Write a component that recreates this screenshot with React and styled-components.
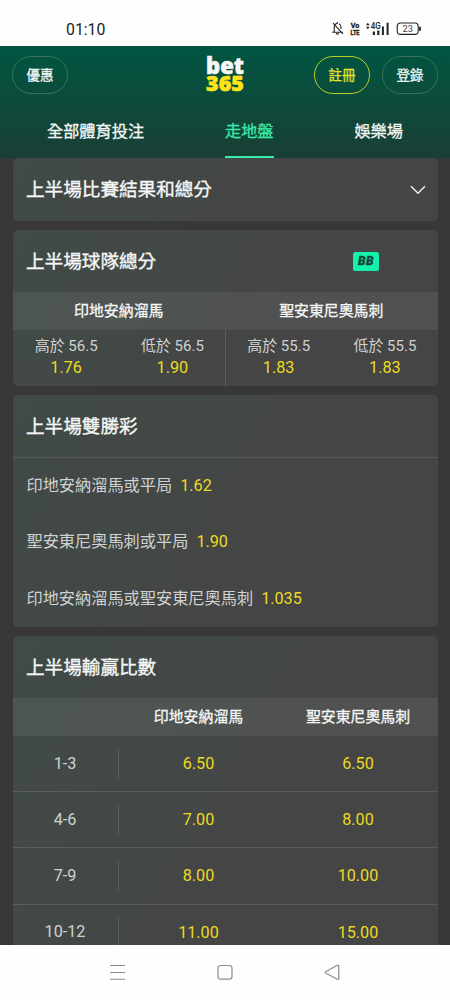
import React from 'react';
import styled, { createGlobalStyle } from 'styled-components';

const Global = createGlobalStyle`
  * { box-sizing: border-box; }
  body { margin: 0; background: #fff; }
`;

const Screen = styled.div`
  width: 450px;
  height: 1000px;
  display: flex;
  flex-direction: column;
  overflow: hidden;
  background: #fefefe;
  color: #f6f8f7;
  font-family: Roboto, "Noto Sans CJK TC", sans-serif;
  white-space: nowrap;
`;

const StatusBar = styled.div`
  height: 46px;
  flex: none;
  display: flex;
  justify-content: space-between;
  padding: 17px 27px 0 66px;
  color: #222;
`;

const Clock = styled.span`
  font-size: 15.8px;
  line-height: 25px;
`;

const Header = styled.header`
  height: 112px;
  flex: none;
  background: linear-gradient(#005641, #0d4b3c 50%, #193e35);
`;

const TopRow = styled.div`
  height: 58px;
  padding: 0 12px;
  display: grid;
  grid-template-columns: 1fr auto 1fr;
  align-items: center;
`;

const Actions = styled.div`
  display: flex;
  justify-content: flex-end;
  gap: 12px;
`;

const Pill = styled.button`
  width: 56px;
  height: 38px;
  padding: 0 0 3px;
  border: 1.5px solid ${(p) => (p.$accent ? '#b9cf25' : '#39705f')};
  border-radius: 19px;
  background: transparent;
  color: ${(p) => (p.$accent ? '#eae32c' : '#f1f6f4')};
  font: 400 13.5px Roboto, "Noto Sans CJK TC", sans-serif;
  -webkit-text-stroke: 0.3px currentColor;
`;

const Logo = styled.div`
  padding-bottom: 3px;
  display: flex;
  flex-direction: column;
  align-items: center;
  font: 800 22px/18px "Open Sans", sans-serif;
  -webkit-text-stroke: 0.6px currentColor;
`;

const LogoDigits = styled.span`
  color: #ffe418;
  font-size: 21.5px;
  line-height: 17px;
`;

const Tabs = styled.nav`
  height: 54px;
  padding: 0 47px;
  display: flex;
  justify-content: space-between;
`;

const Tab = styled.div`
  height: 54px;
  padding-top: 16px;
  border-bottom: 2.5px solid ${(p) => (p.$active ? '#3be8b0' : 'transparent')};
  color: ${(p) => (p.$active ? '#3be8a9' : '#f3f8f6')};
  font-size: 16.2px;
  line-height: 24px;
  -webkit-text-stroke: 0.3px currentColor;
`;

const Markets = styled.main`
  height: 787px;
  flex: none;
  padding: 0 12.5px;
  display: flex;
  flex-direction: column;
  gap: 9px;
  overflow: hidden;
  background: #383838;
`;

const Card = styled.section`
  height: ${(p) => p.$height}px;
  flex: none;
  overflow: hidden;
  border-radius: 5px;
  background: linear-gradient(120deg, #414a47 0%, #424846 35%, #454545 60%, #454545 100%);
`;

const CardHead = styled.div`
  height: 62px;
  padding: 1px 11px 0 13.5px;
  display: flex;
  align-items: center;
  justify-content: space-between;
`;

const Title = styled.h2`
  margin: 0;
  font-size: 18.6px;
  line-height: 28px;
  font-weight: 400;
  -webkit-text-stroke: 0.35px currentColor;
`;

const Builder = styled.span`
  width: 26px;
  height: 19px;
  margin-right: 47.5px;
  border-radius: 2.5px;
  background: #14f0ac;
  color: #12453a;
  font: italic 900 12px/19px Roboto, sans-serif;
  letter-spacing: 0.6px;
  text-align: center;
  -webkit-text-stroke: 0.3px currentColor;
`;

const Band = styled.div`
  height: 38px;
  padding-bottom: 3px;
  display: grid;
  grid-template-columns: ${(p) => p.$columns};
  align-items: center;
  text-align: center;
  background: rgba(255, 255, 255, 0.065);
  font-size: 14.9px;
  -webkit-text-stroke: 0.3px currentColor;
`;

const Totals = styled.div`
  height: 56px;
  display: grid;
  grid-template-columns: repeat(4, 1fr);
`;

const Total = styled.div`
  padding-top: 5px;
  display: flex;
  flex-direction: column;
  align-items: center;
  border-left: 1px solid ${(p) => (p.$divided ? '#5a5d5c' : 'transparent')};
`;

const Label = styled.span`
  color: #d0d2d1;
  font-size: ${(p) => (p.$small ? '15px' : '16.2px')};
  line-height: 22px;
`;

const Odds = styled.span`
  color: #edda1f;
  font-size: 16.2px;
  line-height: 21px;
`;

const Options = styled.div`
  border-top: 1px solid #565b59;
`;

const Option = styled.div`
  height: 56.3px;
  padding: 17px 0 0 14px;
  display: flex;
  align-items: baseline;
  gap: 8px;
`;

const Margin = styled.div`
  height: 56.2px;
  display: grid;
  grid-template-columns: 106px 160px 1fr;
  align-items: center;
  text-align: center;
  border-bottom: 1px solid #585c5a;
`;

const Range = styled.div`
  height: 30px;
  border-right: 1px solid #5b5f5d;
  color: #d0d2d1;
  font-size: 16.2px;
  line-height: 30px;
`;

const SystemNav = styled.div`
  height: 55px;
  flex: none;
  padding: 0 109px 0 108px;
  display: flex;
  align-items: center;
  justify-content: space-between;
`;

const StatusIcons = () => (
  <svg width="92" height="24" viewBox="0 0 92 24" fill="none" stroke="#222" strokeWidth="1.1">
    <path d="M1.2 15.2h10.6M3.2 15v-4.3c0-2.6 1.3-4.1 3.2-4.3M6.4 6.4V5M8 6.7c1.5.7 2 2.2 2 4.2v1M4.9 16.9h3M2.1 6.2l9.8 10.6" />
    <g fill="#222" stroke="#222" strokeWidth=".35" fontFamily="Roboto" textAnchor="middle">
      <text x="24" y="11.2" fontSize="7.4" fontWeight="700" textLength="8.5" lengthAdjust="spacingAndGlyphs">Vo</text>
      <text x="24" y="18" fontSize="7" fontWeight="700" textLength="9" lengthAdjust="spacingAndGlyphs">LTE</text>
      <text x="44.7" y="12" fontSize="8.8" fontWeight="500" strokeWidth="0" textLength="10" lengthAdjust="spacingAndGlyphs">4G</text>
    </g>
    <path fill="#222" stroke="none" d="M35 8.2h3.6l-1.8-2.4zM35 9.8h3.6l-1.8 2.4zM41.8 14.5H44V18h-2.2zM46.2 13.4h2.2V18h-2.2zM50.9 9.5h2V18h-2zM55.6 5.7h2V18h-2z" />
    <rect x="66.2" y="6" width="21" height="11.4" rx="3.5" />
    <path d="M89 9.8v4" strokeWidth="1.8" />
    <text x="76.7" y="15" fill="#444" stroke="none" fontFamily="Roboto" fontSize="9.4" textAnchor="middle">23</text>
  </svg>
);

const Chevron = () => (
  <svg width="18" height="12" viewBox="0 0 18 12" fill="none" stroke="#e8eae9" strokeWidth="1.6">
    <path d="M2 2.2l7 7 7-7" />
  </svg>
);

const totals = [
  ['高於 56.5', '1.76'],
  ['低於 56.5', '1.90'],
  ['高於 55.5', '1.83'],
  ['低於 55.5', '1.83'],
];

const options = [
  ['印地安納溜馬或平局', '1.62'],
  ['聖安東尼奧馬刺或平局', '1.90'],
  ['印地安納溜馬或聖安東尼奧馬刺', '1.035'],
];

const margins = [
  ['1-3', '6.50', '6.50'],
  ['4-6', '7.00', '8.00'],
  ['7-9', '8.00', '10.00'],
  ['10-12', '11.00', '15.00'],
];

export default function App() {
  return (
    <Screen>
      <Global />
      <StatusBar>
        <Clock>01:10</Clock>
        <StatusIcons />
      </StatusBar>
      <Header>
        <TopRow>
          <div><Pill>優惠</Pill></div>
          <Logo>
            <span>bet</span>
            <LogoDigits>365</LogoDigits>
          </Logo>
          <Actions>
            <Pill $accent>註冊</Pill>
            <Pill>登錄</Pill>
          </Actions>
        </TopRow>
        <Tabs>
          <Tab>全部體育投注</Tab>
          <Tab $active>走地盤</Tab>
          <Tab>娛樂場</Tab>
        </Tabs>
      </Header>
      <Markets>
        <Card $height={63}>
          <CardHead>
            <Title>上半場比賽結果和總分</Title>
            <Chevron />
          </CardHead>
        </Card>
        <Card $height={156}>
          <CardHead>
            <Title>上半場球隊總分</Title>
            <Builder>BB</Builder>
          </CardHead>
          <Band $columns="1fr 1fr">
            <span>印地安納溜馬</span>
            <span>聖安東尼奧馬刺</span>
          </Band>
          <Totals>
            {totals.map(([label, odds], i) => (
              <Total key={label} $divided={i === 2}>
                <Label $small>{label}</Label>
                <Odds>{odds}</Odds>
              </Total>
            ))}
          </Totals>
        </Card>
        <Card $height={232}>
          <CardHead>
            <Title>上半場雙勝彩</Title>
          </CardHead>
          <Options>
            {options.map(([label, odds]) => (
              <Option key={label}>
                <Label>{label}</Label>
                <Odds>{odds}</Odds>
              </Option>
            ))}
          </Options>
        </Card>
        <Card $height={330}>
          <CardHead>
            <Title>上半場輸贏比數</Title>
          </CardHead>
          <Band $columns="106px 160px 1fr">
            <span />
            <span>印地安納溜馬</span>
            <span>聖安東尼奧馬刺</span>
          </Band>
          {margins.map(([range, home, away]) => (
            <Margin key={range}>
              <Range>{range}</Range>
              <Odds>{home}</Odds>
              <Odds>{away}</Odds>
            </Margin>
          ))}
        </Card>
      </Markets>
      <SystemNav>
        <svg width="18" height="18" viewBox="0 0 18 18" fill="none" stroke="#8c8c8c" strokeWidth="1.1">
          <path d="M2 1.5h15M2 8.5h15M2 15.2h15" />
        </svg>
        <svg width="18" height="18" viewBox="0 0 18 18" fill="none" stroke="#8c8c8c" strokeWidth="1.2">
          <rect x="2" y="1.5" width="14" height="13.6" rx="2.5" />
        </svg>
        <svg width="18" height="18" viewBox="0 0 18 18" fill="none" stroke="#8c8c8c" strokeWidth="1.2" strokeLinejoin="round">
          <path d="M15.8 2.1v12.4c0 .9-.8 1.2-1.5.8L3 9.2c-.8-.5-.8-1.2 0-1.7l11.3-6.2c.7-.4 1.5-.1 1.5.8z" />
        </svg>
      </SystemNav>
    </Screen>
  );
}
